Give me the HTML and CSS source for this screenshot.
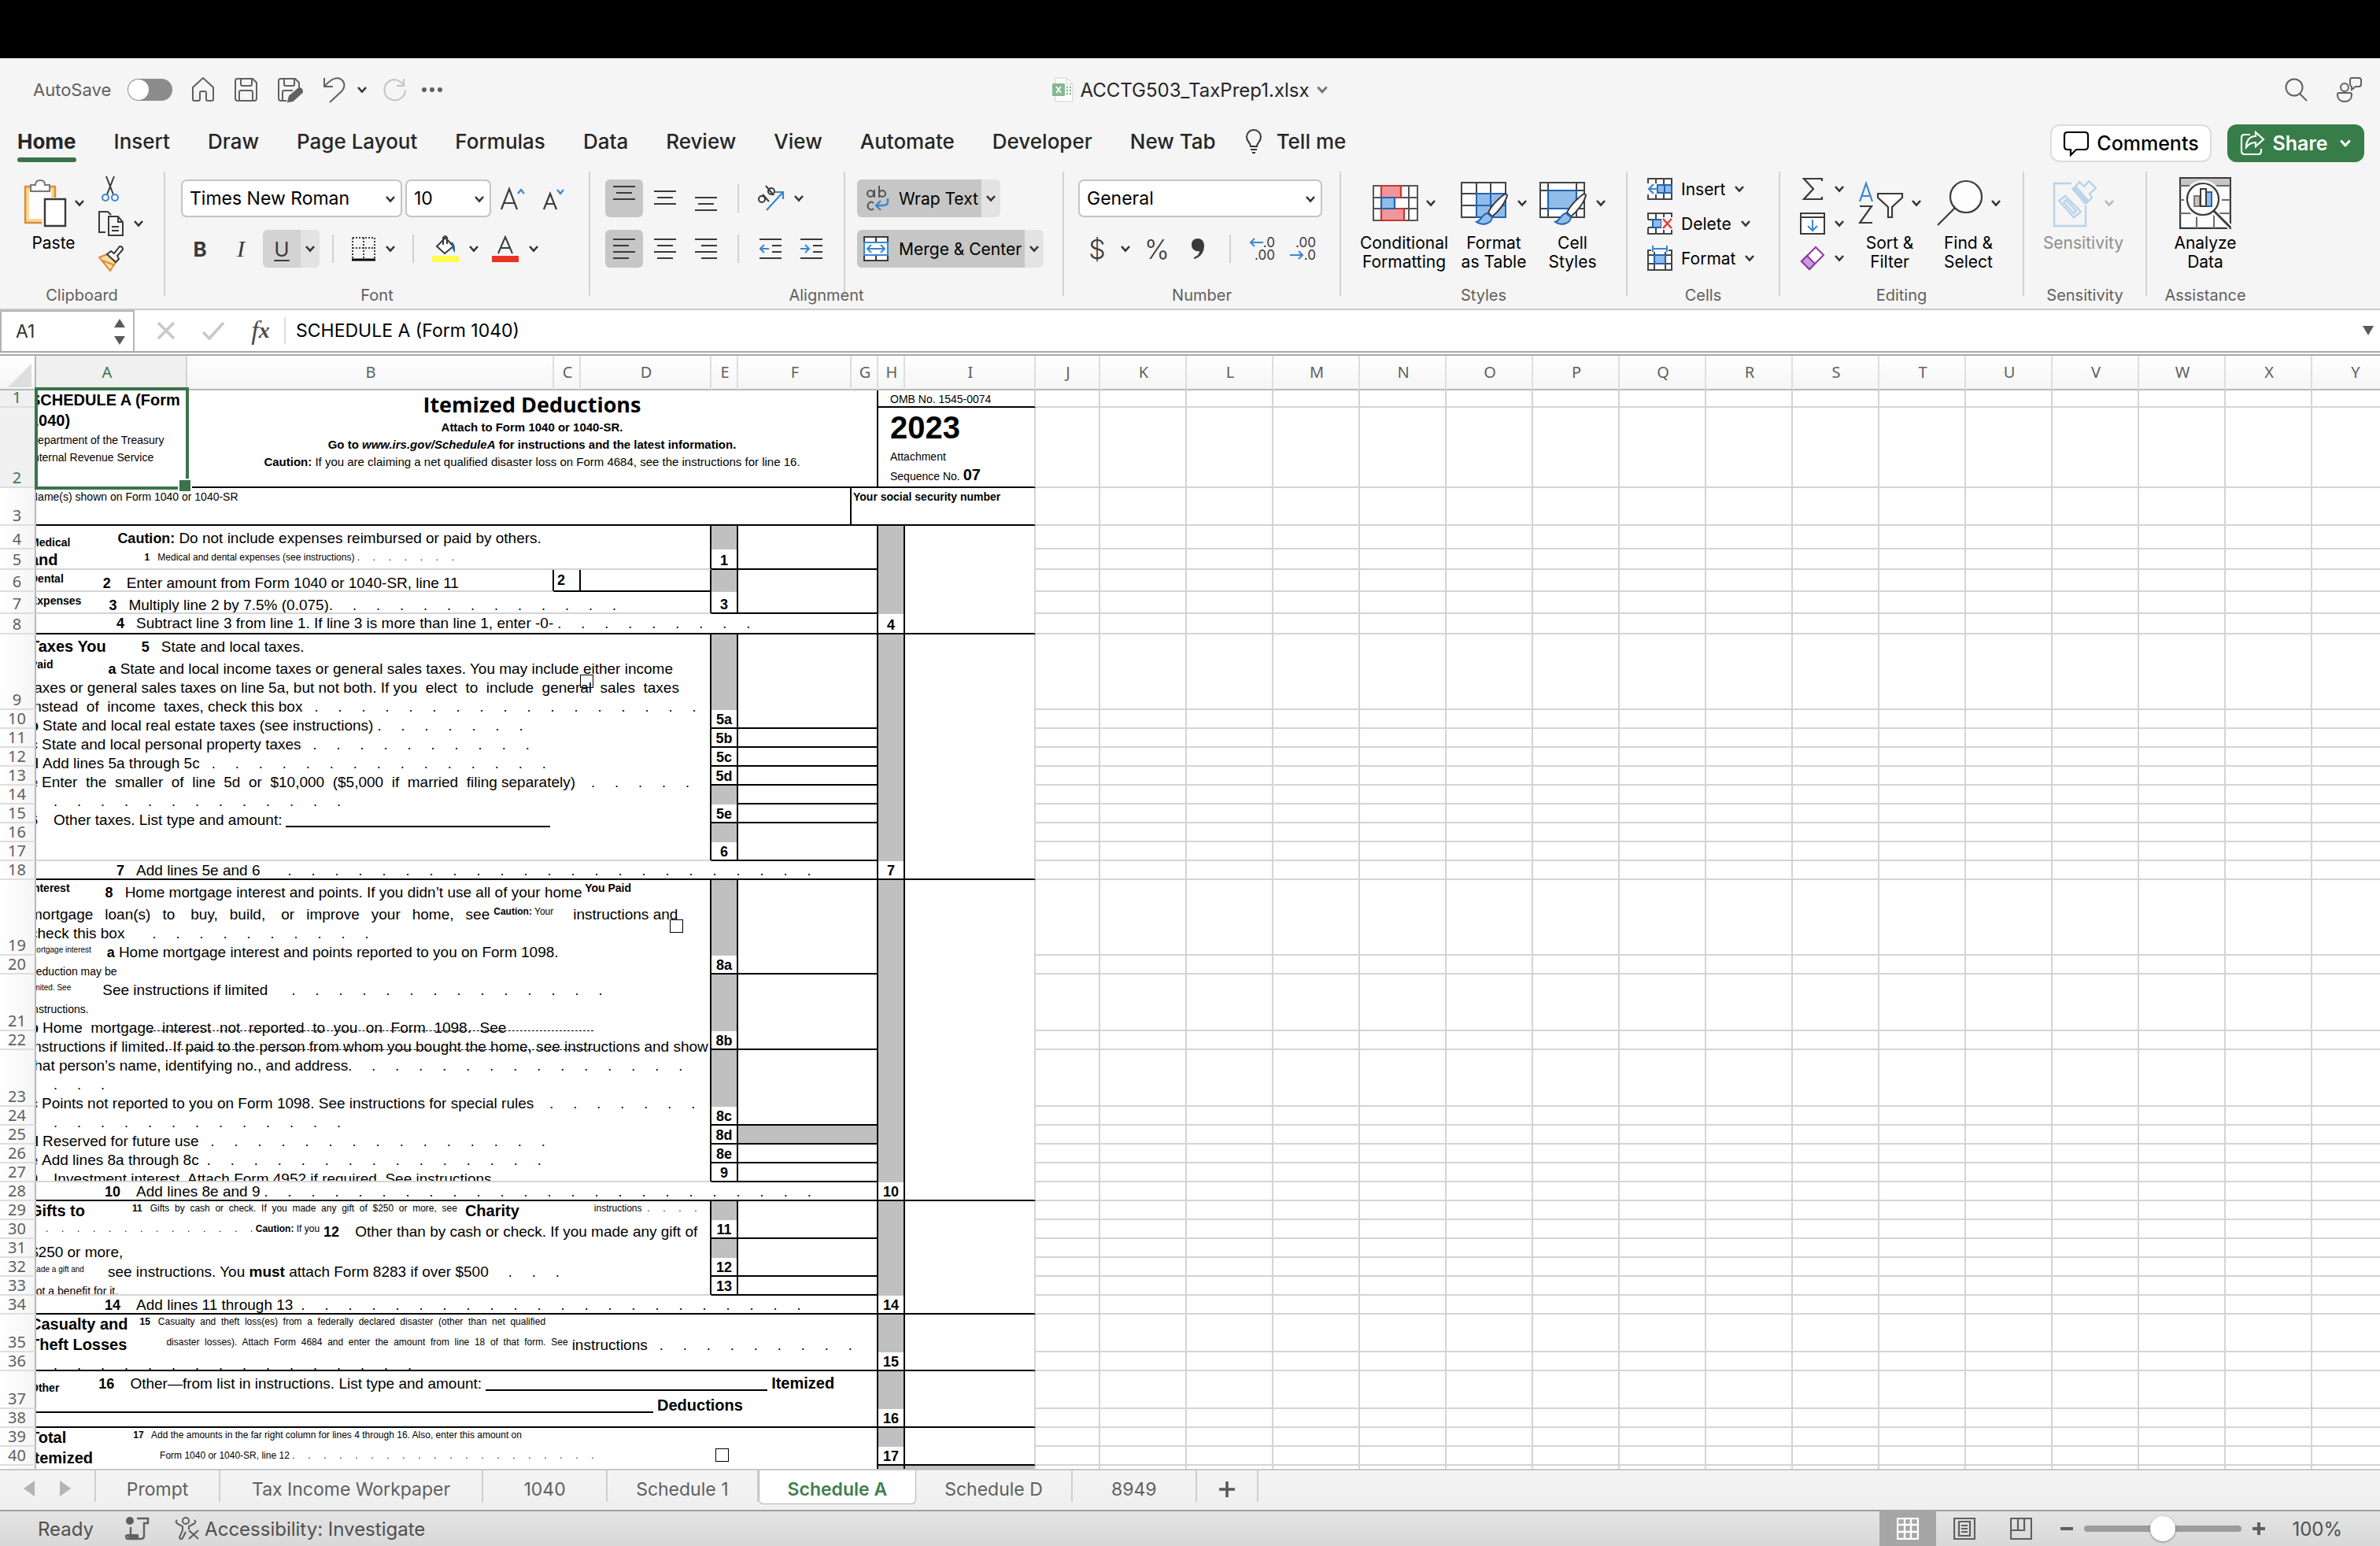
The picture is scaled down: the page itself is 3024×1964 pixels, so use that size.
FILE: index.html
```html
<!DOCTYPE html>
<html lang="en">
<head>
  <meta charset="UTF-8">
  <meta name="viewport" content="width=device-width, initial-scale=1.0">
  <title>ACCTG503_TaxPrep1.xlsx</title>
  <link rel="stylesheet" href="styles.css">
</head>
<body>
  <svg class="sprite" aria-hidden="true">
    <symbol id="chev" viewBox="0 0 14 10"><path d="M2 2l5 5.5L12 2" fill="none" stroke="currentColor" stroke-width="2.6"/></symbol>
    <symbol id="brush" viewBox="0 0 44 44"><path d="M40 2C33 6 22 17 18 26l5 5C31 25 40 13 42 4z" fill="#fff" stroke="#3b3a39" stroke-width="2"/><path d="M17 27c-7 0-7 9-14 11 7 5 19 3 20-6z" fill="#8fbce8" stroke="#2563b0" stroke-width="2"/></symbol>
  </svg>

  <div class="app">
    <div class="notch"></div>

    <!-- Title bar -->
    <header class="titlebar">
      <div class="quick">
        <label for="autosave">AutoSave</label>
        <input type="checkbox" class="toggle" id="autosave">
        <button class="icon" aria-label="Home"><svg width="32" height="34" viewBox="0 0 32 34"><path d="M3 14L16 2l13 12v15q0 2-2 2h-5q-2 0-2-2v-8q0-2-2-2h-4q-2 0-2 2v8q0 2-2 2H5q-2 0-2-2z"/></svg></button>
        <button class="icon" aria-label="Save"><svg width="32" height="34" viewBox="0 0 32 34"><path d="M5 3h19l5 5v20q0 3-3 3H5q-3 0-3-3V6q0-3 3-3zM9 3v7q0 2 2 2h10q2 0 2-2V3M7 31V20q0-2 2-2h13q2 0 2 2v11"/></svg></button>
        <button class="icon" aria-label="Save As"><svg width="34" height="34" viewBox="0 0 34 34"><path d="M12 31H5q-3 0-3-3V6q0-3 3-3h18l5 5v6M9 3v7q0 2 2 2h9q2 0 2-2V3M7 31V20q0-2 2-2h11"/><path d="M14 32l2-7 12-10q4 0 4 5L20 31z" fill="#616161"/></svg></button>
        <div class="pair">
          <button class="icon" aria-label="Undo"><svg width="32" height="34" viewBox="0 0 32 34"><path d="M3 2v11h11M4 12C12 3 18 1 23 3c6 3 7 10 3 15L10 33"/></svg></button>
          <svg class="chev"><use href="#chev"/></svg>
        </div>
        <button class="icon off" aria-label="Redo"><svg width="32" height="34" viewBox="0 0 32 34"><path d="M27 3v9h-9M27 12C22 3 12 2 6 8c-6 7-4 18 4 21 9 4 19-2 19-12"/></svg></button>
        <button class="icon dots-btn" aria-label="More"><svg width="32" height="10" viewBox="0 0 32 10"><g fill="#616161" stroke="none"><circle cx="6" cy="5" r="3"/><circle cx="16" cy="5" r="3"/><circle cx="26" cy="5" r="3"/></g></svg></button>
      </div>
      <button class="doc-title">
        <svg width="28" height="34" viewBox="0 0 28 34"><path d="M5 2h14l8 8v22H5z" fill="#fff" stroke="#cfcfcf"/><path d="M19 2v8h8" fill="none" stroke="#cfcfcf"/><rect x="1" y="9" width="16" height="16" rx="1" fill="#86b894"/><path d="M6 13l6 8M12 13l-6 8" stroke="#fff" stroke-width="1.8"/><path d="M19 14h2M19 18h2M19 22h2M23 14h2M23 18h2M23 22h2" stroke="#86b894" stroke-width="2.4"/></svg>
        <span>ACCTG503_TaxPrep1.xlsx</span>
        <svg class="chev wide"><use href="#chev"/></svg>
      </button>
      <div class="title-right">
        <button class="icon" aria-label="Search"><svg width="32" height="34" viewBox="0 0 32 34"><circle cx="13" cy="14" r="10.5"/><path d="M20 22l9 9"/></svg></button>
        <button class="icon" aria-label="Feedback"><svg width="34" height="34" viewBox="0 0 34 34"><circle cx="11" cy="14" r="5"/><path d="M2 23q0-2 2-2h14q2 0 2 2c0 6-4 9-9 9s-9-3-9-9zM20 2h9q3 0 3 3v5q0 3-3 3h-4l-5 4v-4q-2-1-2-3V5q0-3 2-3z"/></svg></button>
      </div>
    </header>

    <!-- Ribbon tabs -->
    <nav class="tabs">
      <button class="tab active">Home</button>
      <button class="tab">Insert</button>
      <button class="tab">Draw</button>
      <button class="tab">Page Layout</button>
      <button class="tab">Formulas</button>
      <button class="tab">Data</button>
      <button class="tab">Review</button>
      <button class="tab">View</button>
      <button class="tab">Automate</button>
      <button class="tab">Developer</button>
      <button class="tab">New Tab</button>
      <button class="tab tell">
        <svg width="24" height="32" viewBox="0 0 24 32"><path d="M8 22c0-5-5-6-5-12a9 9 0 0 1 18 0c0 6-5 7-5 12zM8 26h8M10 30h4" fill="none" stroke="#333" stroke-width="2"/></svg>
        Tell me
      </button>
      <div class="tab-actions">
        <button class="btn-comments"><svg width="34" height="34" viewBox="0 0 34 34"><path d="M6 3h22q4 0 4 4v14q0 4-4 4H17l-7 7v-7H6q-4 0-4-4V7q0-4 4-4z" fill="none" stroke="#000" stroke-width="2.2"/></svg>Comments</button>
        <button class="btn-share"><svg width="32" height="32" viewBox="0 0 32 32"><g fill="none" stroke="#fff" stroke-width="2.2"><path d="M13 5H6Q2 5 2 9v17q0 4 4 4h17q4 0 4-4v-3"/><path d="M20 2l10 9-10 9v-5c-6 0-9 2-12 6 0-8 4-14 12-14z"/></g></svg>Share<svg class="chev wide"><use href="#chev"/></svg></button>
      </div>
    </nav>

    <!-- Ribbon -->
    <section class="ribbon">
      <div class="group g-clipboard">
        <div class="body">
          <button class="big w92">
            <span class="pic"><svg width="56" height="62" viewBox="0 0 56 62"><path d="M3 10h38v46H3z" fill="#f5d98f" stroke="#e08a3c" stroke-width="2.4"/><path d="M8 15h28v36H8z" fill="#fdfdfd"/><path d="M10 16V8h6q0-6 6-6t6 6h6v8z" fill="#fff" stroke="#777" stroke-width="2"/><path d="M26 24h30v37H24z" fill="#f5f5f5"/><path d="M28 26h26v34H28z" fill="#fff" stroke="#3b3a39" stroke-width="2.4"/></svg><svg class="chev"><use href="#chev"/></svg></span>
            Paste
          </button>
          <div class="stack">
            <button class="row" aria-label="Cut"><svg width="32" height="34" viewBox="0 0 32 34"><path d="M11 1l9 23M21 1l-9 23" stroke="#3b3a39" stroke-width="2"/><g fill="none" stroke="#3b86cf" stroke-width="2"><circle cx="10" cy="28" r="4"/><circle cx="22" cy="28" r="4"/></g></svg></button>
            <button class="row" aria-label="Copy"><svg width="34" height="34" viewBox="0 0 34 34"><g fill="none" stroke="#3b3a39" stroke-width="2"><path d="M10 28H2V2h11l4 4"/><path d="M14 8h12l6 7v17H14zM26 8v7h6M18 21h9M18 26h9"/></g></svg><svg class="chev"><use href="#chev"/></svg></button>
            <button class="row" aria-label="Format Painter"><svg width="34" height="34" viewBox="0 0 34 34"><path d="M2 16l10-4 11 10-7 11z" fill="#f8dfa0" stroke="#e08a3c" stroke-width="2"/><path d="M6 20l16 6" stroke="#e08a3c" stroke-width="2"/><path d="M12 12l5-4 4 3 7-9q4 0 4 4l-7 8 2 4-4 4z" fill="#fff" stroke="#3b3a39" stroke-width="2"/></svg></button>
          </div>
        </div>
        <div class="label">Clipboard</div>
      </div>
      <div class="sep"></div>

      <div class="group g-font">
        <div class="body rows">
          <div class="line">
            <span class="drop font-name"><select aria-label="Font"><option>Times New Roman</option></select><svg class="chev"><use href="#chev"/></svg></span>
            <span class="drop font-size"><select aria-label="Font size"><option>10</option></select><svg class="chev"><use href="#chev"/></svg></span>
            <button class="tool" aria-label="Increase font size"><svg width="34" height="34" viewBox="0 0 34 34"><path d="M2 31L12 5l10 26M5 23h14" fill="none" stroke="#3b3a39" stroke-width="2.2"/><path d="M23 11l4-5 4 5" fill="none" stroke="#3b86cf" stroke-width="2.2"/></svg></button>
            <button class="tool" aria-label="Decrease font size"><svg width="34" height="34" viewBox="0 0 34 34"><path d="M4 31l8-20 8 20M7 24h10" fill="none" stroke="#3b3a39" stroke-width="2.2"/><path d="M21 6l4 5 4-5" fill="none" stroke="#3b86cf" stroke-width="2.2"/></svg></button>
          </div>
          <div class="line">
            <button class="tool letter bold">B</button>
            <button class="tool letter italic">I</button>
            <span class="split on-light"><button class="tool letter under">U</button><button class="more" aria-label="Underline options"><svg class="chev"><use href="#chev"/></svg></button></span>
            <span class="bar"></span>
            <span class="split"><button class="tool narrow" aria-label="Borders"><svg width="32" height="32" viewBox="0 0 32 32"><path d="M2 2h28M2 15h28M2 2v26M16 2v26M30 2v26" stroke="#3b3a39" stroke-width="2" stroke-dasharray="2 2"/><path d="M1 30h30" stroke="#000" stroke-width="3"/></svg></button><button class="more" aria-label="Border options"><svg class="chev"><use href="#chev"/></svg></button></span>
            <span class="bar"></span>
            <span class="split"><button class="tool" aria-label="Fill color"><svg width="34" height="34" viewBox="0 0 34 34"><path d="M6 14L17 3l10 11-11 9z" fill="#fff" stroke="#3b3a39" stroke-width="2"/><path d="M14 12V3q3-4 5 0v8" fill="none" stroke="#3b3a39" stroke-width="2"/><path d="M24 8q6 1 5 14-4-4-3-9z" fill="#2563b0"/><path d="M0 26h34v8H0z" fill="#fffb4b"/></svg></button><button class="more" aria-label="Fill options"><svg class="chev"><use href="#chev"/></svg></button></span>
            <span class="split"><button class="tool" aria-label="Font color"><svg width="34" height="34" viewBox="0 0 34 34"><path d="M8 23L17 2l9 21M11 16h12" fill="none" stroke="#3b3a39" stroke-width="2"/><path d="M0 26h34v8H0z" fill="#ea3323"/></svg></button><button class="more" aria-label="Font color options"><svg class="chev"><use href="#chev"/></svg></button></span>
          </div>
        </div>
        <div class="label">Font</div>
      </div>
      <div class="sep"></div>

      <div class="group g-align">
        <div class="body">
          <div class="rows half">
            <div class="line">
              <button class="tool on" aria-label="Top align"><svg class="glyph" viewBox="0 0 28 32"><path d="M0 1h28M4 9h20M0 17h28"/></svg></button>
              <button class="tool" aria-label="Middle align"><svg class="glyph" viewBox="0 0 28 32"><path d="M0 7h28M4 15h20M0 23h28"/></svg></button>
              <button class="tool" aria-label="Bottom align"><svg class="glyph" viewBox="0 0 28 32"><path d="M0 15h28M4 23h20M0 31h28"/></svg></button>
              <span class="bar"></span>
              <span class="split"><button class="tool" aria-label="Orientation"><svg width="36" height="34" viewBox="0 0 36 34"><g fill="none" stroke="#3b3a39" stroke-width="2"><circle cx="7" cy="18" r="4"/><path d="M8 12l8 9M12 1l10 12"/><circle cx="19" cy="8" r="4"/></g><path d="M13 32L33 10M24 9h10v9" fill="none" stroke="#3b86cf" stroke-width="2.2"/></svg></button><button class="more" aria-label="Orientation options"><svg class="chev"><use href="#chev"/></svg></button></span>
            </div>
            <div class="line">
              <button class="tool on" aria-label="Align left"><svg class="glyph" viewBox="0 0 28 32"><path d="M0 4h28M0 12h20M0 20h28M0 28h20"/></svg></button>
              <button class="tool" aria-label="Center"><svg class="glyph" viewBox="0 0 28 32"><path d="M0 4h28M4 12h20M0 20h28M4 28h20"/></svg></button>
              <button class="tool" aria-label="Align right"><svg class="glyph" viewBox="0 0 28 32"><path d="M0 4h28M8 12h20M0 20h28M8 28h20"/></svg></button>
              <span class="bar"></span>
              <button class="tool" aria-label="Decrease indent"><svg class="glyph" viewBox="0 0 28 32"><path d="M0 4h28M16 12h12M16 20h12M0 28h28"/><path class="blue" d="M12 16H1M6 11l-5 5 5 5"/></svg></button>
              <button class="tool" aria-label="Increase indent"><svg class="glyph" viewBox="0 0 28 32"><path d="M0 4h28M16 12h12M16 20h12M0 28h28"/><path class="blue" d="M0 16h11M6 11l5 5-5 5"/></svg></button>
            </div>
          </div>
          <div class="sep"></div>
          <div class="rows half-right">
            <div class="line">
              <span class="split on-dark"><button class="texty"><svg width="30" height="34" viewBox="0 0 30 34"><g fill="none" stroke="#555" stroke-width="2"><circle cx="5" cy="11" r="4"/><path d="M10 6v10M16 1v15"/><circle cx="20" cy="11" r="4"/><path d="M9 23q-3-3-6 0-3 4 0 7 3 3 6 0"/></g><path d="M27 17v4q0 5-6 5h-8M18 20l-6 6 6 6" fill="none" stroke="#3b86cf" stroke-width="2.4"/></svg>Wrap Text</button><button class="more" aria-label="Wrap options"><svg class="chev"><use href="#chev"/></svg></button></span>
            </div>
            <div class="line">
              <span class="split on-dark"><button class="texty merge"><svg width="32" height="32" viewBox="0 0 32 32"><path d="M1 1h30v30H1zM16 1v7M16 24v7" fill="#fff" stroke="#3b3a39" stroke-width="2.2"/><path d="M1 8h30v16H1z" fill="#fff" stroke="#3b86cf" stroke-width="2.2"/><path d="M6 16h20M10 11l-5 5 5 5M22 11l5 5-5 5" fill="none" stroke="#3b86cf" stroke-width="2"/></svg>Merge &amp; Center</button><button class="more" aria-label="Merge options"><svg class="chev"><use href="#chev"/></svg></button></span>
            </div>
          </div>
        </div>
        <div class="label">Alignment</div>
      </div>
      <div class="sep"></div>

      <div class="group g-number">
        <div class="body rows">
          <div class="line">
            <span class="drop num-format"><select aria-label="Number format"><option>General</option></select><svg class="chev"><use href="#chev"/></svg></span>
          </div>
          <div class="line">
            <span class="split"><button class="tool sign">$</button><button class="more" aria-label="Currency options"><svg class="chev"><use href="#chev"/></svg></button></span>
            <button class="tool sign">%</button>
            <button class="tool" aria-label="Comma style"><svg width="18" height="28" viewBox="0 0 18 28"><path d="M9 1c5 0 8 4 8 9 0 9-5 15-13 17v-2c5-2 7-5 7-8C5 18 1 14 1 9c0-5 3-8 8-8z" fill="#3b3a39"/></svg></button>
            <span class="bar"></span>
            <button class="tool decimals"><span><svg width="18" height="12" viewBox="0 0 18 12"><path d="M18 6H2M7 1L2 6l5 5"/></svg>.0</span><span>.00</span></button>
            <button class="tool decimals"><span>.00</span><span><svg width="18" height="12" viewBox="0 0 18 12"><path d="M0 6h16M11 1l5 5-5 5"/></svg>.0</span></button>
          </div>
        </div>
        <div class="label">Number</div>
      </div>
      <div class="sep"></div>

      <div class="group g-styles">
        <div class="body">
          <button class="big w120">
            <span class="pic"><svg width="58" height="46" viewBox="0 0 58 46"><path d="M1 1h56v44H1zM1 16h56M1 30h56M11 1v44M46 1v44" fill="#fdfdfd" stroke="#555" stroke-width="2"/><path d="M11 1h25v15H11zM11 30h29v15H11z" fill="#f0969a" stroke="#c8372d" stroke-width="2.2"/><path d="M11 16h17v14H11z" fill="#8fbce8" stroke="#2563b0" stroke-width="2.2"/></svg><svg class="chev"><use href="#chev"/></svg></span>
            Conditional<br>Formatting
          </button>
          <button class="big w108">
            <span class="pic"><svg width="62" height="56" viewBox="0 0 62 56"><path d="M1 2h56v44H1zM1 16h56M1 31h56M20 2v44M38 2v44" fill="#fdfdfd" stroke="#444" stroke-width="2"/><path d="M20 16h37v30H20zM38 16v30M20 31h37" fill="#8fbce8" stroke="#2563b0" stroke-width="2"/><use href="#brush" x="17" y="14" width="44" height="44"/></svg><svg class="chev"><use href="#chev"/></svg></span>
            Format<br>as Table
          </button>
          <button class="big w92">
            <span class="pic"><svg width="62" height="56" viewBox="0 0 62 56"><path d="M1 2h56v44H1zM1 12h56M1 35h56M11 2v44M47 2v44" fill="#fdfdfd" stroke="#444" stroke-width="2"/><path d="M11 12h36v23H11z" fill="#8fbce8" stroke="#2563b0" stroke-width="2.2"/><use href="#brush" x="17" y="14" width="44" height="44"/></svg><svg class="chev"><use href="#chev"/></svg></span>
            Cell<br>Styles
          </button>
        </div>
        <div class="label">Styles</div>
      </div>
      <div class="sep"></div>

      <div class="group g-cells">
        <div class="body">
          <div class="stack">
            <button class="row"><svg width="32" height="28" viewBox="0 0 32 28"><path d="M1 1h30v26H1zM1 9h30M1 19h30M11 1v26M21 1v26" fill="#fff" stroke="#444" stroke-width="2"/><path d="M13 9h18v10H13zM22 9v10" fill="#8fbce8" stroke="#2563b0" stroke-width="2"/><path d="M0 7h12v14H0z" fill="#f5f5f5"/><path d="M14 14H2M8 8l-6 6 6 6" fill="none" stroke="#3b86cf" stroke-width="2.2"/></svg>Insert<svg class="chev"><use href="#chev"/></svg></button>
            <button class="row"><svg width="32" height="28" viewBox="0 0 32 28"><path d="M1 9V1h30v8H1M11 1v8M21 1v8M1 19v8h30v-8H1M11 19v8M21 19v8" fill="#fff" stroke="#444" stroke-width="2"/><path d="M7 9h11v10H7z" fill="#8fbce8" stroke="#2563b0" stroke-width="2"/><path d="M18 6h14v16H18z" fill="#f5f5f5"/><path d="M20 8l11 12M31 8L20 20" stroke="#dd3b34" stroke-width="2.4"/></svg>Delete<svg class="chev"><use href="#chev"/></svg></button>
            <button class="row"><svg width="32" height="32" viewBox="0 0 32 32"><path d="M1 6h30v25H1zM1 12h30M1 23h30M9 6v25M23 6v25" fill="#fff" stroke="#444" stroke-width="2"/><path d="M5 0h22v8H5z" fill="#f5f5f5"/><path d="M9 12h14v11H9z" fill="#8fbce8" stroke="#2563b0" stroke-width="2.2"/><path d="M7 4h18M7 0v8M25 0v8" stroke="#3b86cf" stroke-width="2"/></svg>Format<svg class="chev"><use href="#chev"/></svg></button>
          </div>
        </div>
        <div class="label">Cells</div>
      </div>
      <div class="sep"></div>

      <div class="group g-editing">
        <div class="body">
          <div class="stack">
            <button class="row" aria-label="AutoSum"><svg width="32" height="30" viewBox="0 0 32 30"><path d="M28 5V2H5l12 13L5 28h23v-3" fill="none" stroke="#3b3a39" stroke-width="2.2"/></svg><svg class="chev"><use href="#chev"/></svg></button>
            <button class="row" aria-label="Fill"><svg width="32" height="28" viewBox="0 0 32 28"><path d="M1 1h30v26H1zM1 6h30" fill="#fff" stroke="#3b3a39" stroke-width="2"/><path d="M16 9v14M10 17l6 6 6-6" fill="none" stroke="#3b86cf" stroke-width="2"/></svg><svg class="chev"><use href="#chev"/></svg></button>
            <button class="row" aria-label="Clear"><svg width="32" height="32" viewBox="0 0 32 32"><path d="M2 20L20 2l10 10-18 18z" fill="#fff" stroke="#8d3aa0" stroke-width="2"/><path d="M2 20l7-7 10 10-7 7z" fill="#cf9cdb" stroke="#8d3aa0" stroke-width="2"/></svg><svg class="chev"><use href="#chev"/></svg></button>
          </div>
          <button class="big w100">
            <span class="pic"><svg width="58" height="56" viewBox="0 0 58 56"><path d="M2 26L10 3l8 23M5 19h10" fill="none" stroke="#3b86cf" stroke-width="2.2"/><path d="M2 32h15L2 53h16" fill="none" stroke="#3b3a39" stroke-width="2.2"/><path d="M25 16h31v5L43 33v13h-5V33L25 21z" fill="#fff" stroke="#3b3a39" stroke-width="2.2"/></svg><svg class="chev"><use href="#chev"/></svg></span>
            Sort &amp;<br>Filter
          </button>
          <button class="big w100">
            <span class="pic"><svg width="60" height="60" viewBox="0 0 60 60"><circle cx="38" cy="22" r="20" fill="#fdfdfd" stroke="#3b3a39" stroke-width="2.2"/><path d="M24 36L2 58" stroke="#3b3a39" stroke-width="2.2"/></svg><svg class="chev"><use href="#chev"/></svg></span>
            Find &amp;<br>Select
          </button>
        </div>
        <div class="label">Editing</div>
      </div>
      <div class="sep"></div>

      <div class="group g-sens">
        <div class="body">
          <button class="big w150" disabled>
            <span class="pic"><svg width="56" height="62" viewBox="0 0 56 62"><g fill="none" stroke="#b9d3ea" stroke-width="2.4"><path d="M24 6H2v54h40V34"/><path d="M8 28l8-6 20 20-9 7zM14 30l3-3 13 14-3 3z"/><path d="M26 14l8-10 6 6 6-7 9 9-8 7 3 5-7 7z"/></g><path d="M24 12l6-3 16 18-5 6z" fill="#b9d3ea"/></svg><svg class="chev"><use href="#chev"/></svg></span>
            Sensitivity
          </button>
        </div>
        <div class="label">Sensitivity</div>
      </div>
      <div class="sep"></div>

      <div class="group g-assist">
        <div class="body">
          <button class="big w148">
            <span class="pic"><svg width="66" height="66" viewBox="0 0 66 66"><path d="M1 1h64v64H1z" fill="#fdfdfd" stroke="#3b3a39" stroke-width="2.4"/><path d="M2 2h62v9H2z" fill="#c8c6c4"/><path d="M1 11h64M1 29h64M1 46h64M22 46v19M44 46v19" stroke="#6b6b6b" stroke-width="2"/><circle cx="30" cy="28" r="24" fill="#f5f5f5"/><path d="M44 44l21 20" stroke="#f5f5f5" stroke-width="7"/><circle cx="30" cy="28" r="20" fill="#fdfdfd" stroke="#3b3a39" stroke-width="2.2"/><path d="M44 43l21 21" stroke="#3b3a39" stroke-width="2.6"/><path d="M19 24h7v13h-7z" fill="#c8c6c4" stroke="#777" stroke-width="2"/><path d="M34 19h7v18h-7z" fill="#8fbce8" stroke="#2563b0" stroke-width="2"/><path d="M27 15h7v22h-7z" fill="#fff" stroke="#3b3a39" stroke-width="2"/></svg></span>
            Analyze<br>Data
          </button>
        </div>
        <div class="label">Assistance</div>
      </div>
    </section>

    <!-- Formula bar -->
    <section class="formula-bar">
      <div class="name-box">
        <input type="text" value="A1" aria-label="Name box">
        <svg width="16" height="34" viewBox="0 0 16 34"><path d="M8 1l7 11H1zM8 34L1 23h14z" fill="#5a5a5a"/></svg>
      </div>
      <button class="fx-btn" aria-label="Cancel"><svg width="24" height="24" viewBox="0 0 24 24"><path d="M2 2l20 20M22 2L2 22" stroke="#c8c8c8" stroke-width="3.6"/></svg></button>
      <button class="fx-btn" aria-label="Enter"><svg width="30" height="24" viewBox="0 0 30 24"><path d="M2 14l8 8L28 2" fill="none" stroke="#c8c8c8" stroke-width="3.6"/></svg></button>
      <button class="fx-btn fx">f<b>x</b></button>
      <input type="text" class="formula" value="SCHEDULE A (Form 1040)" aria-label="Formula">
      <svg class="expand" width="14" height="12" viewBox="0 0 14 12"><path d="M0 0h14L7 12z" fill="#5a5a5a"/></svg>
    </section>

    <!-- Worksheet -->
    <main class="sheet">
      <table class="grid">
        <colgroup>
          <col class="c-head"><col class="c-a"><col class="c-b"><col class="c-s"><col class="c-l"><col class="c-s"><col class="c-f"><col class="c-s"><col class="c-s"><col class="c-l"><col class="c-j">
        </colgroup>
        <thead>
          <tr>
            <th class="corner"><svg width="30" height="30" viewBox="0 0 30 30"><path d="M30 0v30H0z" fill="#dedede"/></svg></th>
            <th class="sel">A</th><th>B</th><th>C</th><th>D</th><th>E</th><th>F</th><th>G</th><th>H</th><th>I</th><th>J</th>
          </tr>
        </thead>
        <tbody>
          <tr>
            <td class="ink no-r" rowspan="2"><div class="txt"><p class="l26"><b class="lg">SCHEDULE A (Form</b></p><p class="l26"><b class="lg">1040)</b></p><p class="l22 o">Department of the Treasury</p><p class="l22 o">Internal Revenue Service</p></div></td>
            <td class="ink" rowspan="2" colspan="6"><div class="txt mid"><h1>Itemized Deductions</h1><p class="l22 h"><b>Attach to Form 1040 or 1040-SR.</b></p><p class="l22 h"><b>Go to <i>www.irs.gov/ScheduleA</i> for instructions and the latest information.</b></p><p class="l22 h"><b>Caution:</b> If you are claiming a net qualified disaster loss on Form 4684, see the instructions for line 16.</p></div></td>
            <td class="ink soft-r" colspan="2"><div class="txt side"><p class="l22 o">OMB No. 1545-0074</p></div></td>
          </tr>
          <tr>
            <td class="ink soft-r" colspan="2"><div class="txt side"><p class="year">2023</p><p class="o">Attachment</p><p class="o l26">Sequence No. <b class="lg">07</b></p></div></td>
          </tr>
          <tr>
            <td class="ink" colspan="6"><div class="txt"><p class="l22 o">Name(s) shown on Form 1040 or 1040-SR</p></div></td>
            <td class="ink soft-r" colspan="3"><div class="txt near"><p class="l22 o"><b>Your social security number</b></p></div></td>
          </tr>
          <tr>
            <td class="ink soft-b" rowspan="2" colspan="4"><div class="txt"><p class="l32"><b class="md down">Medical</b>            <b>Caution:</b> <span>Do not include expenses reimbursed or paid by others.</span></p><p><b class="lg">and</b>                      <small class="up"><b>1</b>   Medical and dental expenses (see instructions) <i class="dots" data-n="7"></i></small></p></div></td>
            <td class="ink shade"></td>
            <td class="ink" rowspan="2" colspan="2"></td>
            <td class="ink shade" rowspan="4"></td>
            <td class="ink soft-r" rowspan="5"></td>
          </tr>
          <tr><td class="ink no">1</td></tr>
          <tr>
            <td class="ink soft-b" colspan="2"><div class="txt"><p class="l34"><b class="md up2">Dental</b>          <b>2</b>    <span>Enter amount from Form 1040 or 1040-SR, line 11</span></p></div></td>
            <td class="ink no left">2</td>
            <td class="ink"></td>
            <td class="ink shade"></td>
            <td class="ink" rowspan="2" colspan="2"></td>
          </tr>
          <tr>
            <td class="ink soft-b" colspan="4"><div class="txt"><p class="l34"><b class="md up2">Expenses</b>       <b>3</b>   <span>Multiply line 2 by 7.5% (0.075)</span><i class="dots" data-n="13"></i></p></div></td>
            <td class="ink no">3</td>
          </tr>
          <tr>
            <td class="ink" colspan="7"><div class="txt"><p>                      <b>4</b>   <span>Subtract line 3 from line 1. If line 3 is more than line 1, enter -0-</span> <i class="dots" data-n="9"></i></p></div></td>
            <td class="ink no">4</td>
          </tr>
          <tr>
            <td class="ink soft-b" rowspan="9" colspan="4">
              <div class="txt"><p class="l32"><b class="lg">Taxes You</b>         <b>5</b>   <span>State and local taxes.</span></p><p><b class="md up2">Paid</b>              <b>a</b> <span>State and local income taxes or general sales taxes. You may include either income</span></p><p><span>taxes or general sales taxes on line 5a, but not both. If you  elect  to  include  general  sales  taxes</span></p><p><span>instead  of  income  taxes, check this box</span>   <i class="dots" data-n="17"></i></p><p><b>b</b> <span>State and local real estate taxes (see instructions)</span> <i class="dots" data-n="7"></i></p><p><b>c</b> <span>State and local personal property taxes</span>   <i class="dots" data-n="10"></i></p><p><b>d</b> <span>Add lines 5a through 5c</span>   <i class="dots" data-n="15"></i></p><p><b>e</b> <span>Enter  the  smaller  of  line  5d  or  $10,000  ($5,000  if  married  filing separately)</span>    <i class="dots" data-n="5"></i></p><p>      <i class="dots" data-n="13"></i></p><p><b>6</b>    <span>Other taxes. List type and amount:</span> <u class="blank a"></u></p></div>
              <input type="checkbox" class="box sales" aria-label="General sales taxes">
            </td>
            <td class="ink shade"></td>
            <td class="ink" rowspan="2" colspan="2"></td>
            <td class="ink shade" rowspan="9"></td>
            <td class="ink soft-r" rowspan="10"></td>
          </tr>
          <tr><td class="ink no">5a</td></tr>
          <tr><td class="ink no">5b</td><td class="ink" colspan="2"></td></tr>
          <tr><td class="ink no">5c</td><td class="ink" colspan="2"></td></tr>
          <tr><td class="ink no">5d</td><td class="ink" colspan="2"></td></tr>
          <tr><td class="ink shade"></td><td class="ink" colspan="2"></td></tr>
          <tr><td class="ink no">5e</td><td class="ink" colspan="2"></td></tr>
          <tr><td class="ink shade"></td><td class="ink" rowspan="2" colspan="2"></td></tr>
          <tr><td class="ink no">6</td></tr>
          <tr>
            <td class="ink" colspan="7"><div class="txt"><p>                      <b>7</b>   <span>Add lines 5e and 6</span>       <i class="dots" data-n="23"></i></p></div></td>
            <td class="ink no">7</td>
          </tr>
          <tr>
            <td class="ink soft-b" rowspan="9" colspan="4">
              <div class="txt"><p class="l32"><b class="md up2">Interest</b>         <b>8</b>   <span>Home mortgage interest and points. If you didn’t use all of your home</span><b class="md up2"> You Paid</b></p><p><span>mortgage</span>   <span>loan(s)</span>   <span>to</span>    <span>buy,</span>   <span>build,</span>    <span>or</span>   <span>improve</span>   <span>your</span>   <span>home,</span>   <span>see</span> <small class="up"><b>Caution:</b> Your</small>     <span>instructions and</span></p><p><span>check this box</span>       <i class="dots" data-n="10"></i></p><p><small class="tiny up">mortgage interest</small>    <b>a</b> <span>Home mortgage interest and points reported to you on Form 1098.</span></p><p class="o">deduction may be</p><p><small class="tiny up">limited. See</small>        <span>See instructions if limited</span>      <i class="dots" data-n="14"></i></p><p class="o">instructions.</p><p><b>b</b> <span>Home  mortgage  interest  not  reported  to  you  on  Form  1098.  See</span></p><p><span>instructions if limited. If paid to the person from whom you bought the home, see instructions and show</span></p><p><span>that person’s name, identifying no., and address</span><i class="dots" data-n="15"></i></p><p>      <i class="dots" data-n="3"></i></p><p><b>c</b> <span>Points not reported to you on Form 1098. See instructions for special rules</span>    <i class="dots" data-n="7"></i></p><p>      <i class="dots" data-n="13"></i></p><p><b>d</b> <span>Reserved for future use</span>   <i class="dots" data-n="15"></i></p><p><b>e</b> <span>Add lines 8a through 8c</span>  <i class="dots" data-n="15"></i></p><p><b>9</b>    <span>Investment interest. Attach Form 4952 if required. See instructions</span></p></div>
              <input type="checkbox" class="box loan" aria-label="Mortgage loan use">
              <div class="dash first"></div>
              <div class="dash second"></div>
            </td>
            <td class="ink shade"></td>
            <td class="ink" rowspan="2" colspan="2"></td>
            <td class="ink shade" rowspan="9"></td>
            <td class="ink soft-r" rowspan="10"></td>
          </tr>
          <tr><td class="ink no">8a</td></tr>
          <tr><td class="ink shade"></td><td class="ink" rowspan="2" colspan="2"></td></tr>
          <tr><td class="ink no">8b</td></tr>
          <tr><td class="ink shade"></td><td class="ink" rowspan="2" colspan="2"></td></tr>
          <tr><td class="ink no">8c</td></tr>
          <tr><td class="ink no">8d</td><td class="ink fill" colspan="2"></td></tr>
          <tr><td class="ink no">8e</td><td class="ink" colspan="2"></td></tr>
          <tr><td class="ink no">9</td><td class="ink" colspan="2"></td></tr>
          <tr>
            <td class="ink" colspan="7"><div class="txt"><p>                   <b>10</b>    <span>Add lines 8e and 9</span> <i class="dots" data-n="24"></i></p></div></td>
            <td class="ink no">10</td>
          </tr>
          <tr>
            <td class="ink soft-b" rowspan="5" colspan="4"><div class="txt"><p class="l26"><b class="lg">Gifts to</b>            <small class="up"><b>11</b>   Gifts  by  cash  or  check.  If  you  made  any  gift  of  $250  or  more,  see</small>  <b class="lg">Charity</b>                   <small class="up">instructions  <i class="dots" data-n="4"></i></small></p><p class="l26">    <small class="up"><i class="dots" data-n="14"></i> <b>Caution:</b> If you</small> <b>12</b>    <span>Other than by cash or check. If you made any gift of</span></p><p class="l26"><span>$250 or more,</span></p><p><small class="tiny up">made a gift and</small>      <span>see instructions. You <b>must</b> attach Form 8283 if over $500</span>     <i class="dots" data-n="3"></i></p><p class="o">not a benefit for it.</p></div></td>
            <td class="ink shade"></td>
            <td class="ink" rowspan="2" colspan="2"></td>
            <td class="ink shade" rowspan="5"></td>
            <td class="ink soft-r" rowspan="6"></td>
          </tr>
          <tr><td class="ink no">11</td></tr>
          <tr><td class="ink shade"></td><td class="ink" rowspan="2" colspan="2"></td></tr>
          <tr><td class="ink no">12</td></tr>
          <tr><td class="ink no">13</td><td class="ink" colspan="2"></td></tr>
          <tr>
            <td class="ink" colspan="7"><div class="txt"><p>                   <b>14</b>    <span>Add lines 11 through 13</span>  <i class="dots" data-n="22"></i></p></div></td>
            <td class="ink no">14</td>
          </tr>
          <tr>
            <td class="ink" rowspan="2" colspan="7"><div class="txt"><p class="l26"><b class="lg">Casualty and</b>   <small class="up"><b>15</b>   Casualty  and  theft  loss(es)  from  a  federally  declared  disaster  (other  than  net  qualified</small></p><p class="l26"><b class="lg">Theft Losses</b>          <small class="up">disaster  losses).  Attach  Form  4684  and  enter  the  amount  from  line  18  of  that  form.  See</small> <span>instructions</span>   <i class="dots" data-n="9"></i></p><p>      <i class="dots" data-n="16"></i></p></div></td>
            <td class="ink shade"></td>
            <td class="ink soft-r" rowspan="2"></td>
          </tr>
          <tr><td class="ink no">15</td></tr>
          <tr>
            <td class="ink" rowspan="2" colspan="7"><div class="txt"><p class="l32"><b class="md down">Other</b>          <b>16</b>    <span>Other—from list in instructions. List type and amount:</span> <u class="blank b"></u> <b class="lg">Itemized</b></p><p><u class="blank c"></u> <b class="lg">Deductions</b></p></div></td>
            <td class="ink shade"></td>
            <td class="ink soft-r" rowspan="2"></td>
          </tr>
          <tr><td class="ink no">16</td></tr>
          <tr>
            <td class="ink no-b" rowspan="3" colspan="7">
              <div class="txt"><p class="l26"><b class="lg">Total</b>                 <small class="up"><b>17</b>   Add the amounts in the far right column for lines 4 through 16. Also, enter this amount on</small></p><p class="l26"><b class="lg">Itemized</b>                 <small class="up">Form 1040 or 1040-SR, line 12 <i class="dots" data-n="20"></i></small></p></div>
              <input type="checkbox" class="box elect" aria-label="Elect to itemize">
            </td>
            <td class="ink shade"></td>
            <td class="ink soft-r" rowspan="2"></td>
          </tr>
          <tr><td class="ink no">17</td></tr>
          <tr><td class="ink shade"></td><td class="shade"></td></tr>
        </tbody>
      </table>
      <div class="selection"></div>
    </main>

    <!-- Sheet tabs -->
    <nav class="sheet-tabs">
      <button class="arrow" aria-label="Previous sheet"><svg width="14" height="20" viewBox="0 0 14 20"><path d="M14 0v20L0 10z" fill="#b4b4b4"/></svg></button>
      <button class="arrow" aria-label="Next sheet"><svg width="14" height="20" viewBox="0 0 14 20"><path d="M0 0v20l14-10z" fill="#b4b4b4"/></svg></button>
      <button class="st first">Prompt</button>
      <button class="st wide">Tax Income Workpaper</button>
      <button class="st">1040</button>
      <button class="st">Schedule 1</button>
      <button class="st active">Schedule A</button>
      <button class="st">Schedule D</button>
      <button class="st">8949</button>
      <button class="st plus" aria-label="New sheet"><svg width="20" height="20" viewBox="0 0 20 20"><path d="M0 10h20M10 0v20" stroke="#5a5a5a" stroke-width="3.6"/></svg></button>
    </nav>

    <!-- Status bar -->
    <footer class="status">
      <span class="ready">Ready</span>
      <svg class="macro" width="32" height="30" viewBox="0 0 32 30"><circle cx="6" cy="5" r="5" fill="#5f5f5f"/><path d="M15 2h14v6h-5v16q0 4-4 4H4q-3 0-3-4h15M7 13v11" fill="none" stroke="#5f5f5f" stroke-width="2.4"/><path d="M2 22h15v6H5z" fill="#5f5f5f"/></svg>
      <button class="access"><svg width="32" height="30" viewBox="0 0 32 30"><g fill="none" stroke="#5f5f5f" stroke-width="2"><circle cx="14" cy="5" r="4"/><path d="M3 4q-3 3 1 5l6 3v5L6 26q1 4 4 1l4-8M25 4q3 3-1 5l-6 3v4"/><path d="M18 17l12 11M30 17L18 28"/></g></svg>Accessibility: Investigate</button>
      <div class="views">
        <button class="view on" aria-label="Normal view"><svg width="28" height="28" viewBox="0 0 28 28"><path d="M1 1h26v26H1zM1 9h26M1 18h26M10 1v26M18 1v26" fill="none" stroke="#fff" stroke-width="2.4"/></svg></button>
        <button class="view" aria-label="Page layout view"><svg width="28" height="28" viewBox="0 0 28 28"><path d="M1 1h26v26H1zM7 5h14v18H7zM10 10h8M10 14h8M10 18h8" fill="none" stroke="#5f5f5f" stroke-width="2.2"/></svg></button>
        <button class="view" aria-label="Page break view"><svg width="28" height="28" viewBox="0 0 28 28"><path d="M1 1h26v26H1zM1 16h17V1M10 1v15" fill="none" stroke="#5f5f5f" stroke-width="2.2"/></svg></button>
        <button class="zoom-btn" aria-label="Zoom out"><svg width="16" height="16" viewBox="0 0 16 16"><path d="M0 8h16" stroke="#5f5f5f" stroke-width="4"/></svg></button>
        <input type="range" class="zoom" min="0" max="100" value="50" aria-label="Zoom">
        <button class="zoom-btn" aria-label="Zoom in"><svg width="16" height="16" viewBox="0 0 16 16"><path d="M0 8h16M8 0v16" stroke="#5f5f5f" stroke-width="4"/></svg></button>
        <span class="percent">100%</span>
      </div>
    </footer>
  </div>

  <script src="script.js"></script>
</body>
</html>
```
FILE: styles.css
```css
/* Reset & Base */
* {
  margin: 0;
  padding: 0;
  box-sizing: border-box;
}

body {
  background: #fff;
  color: #000;
  font-family: Inter, "Liberation Sans", sans-serif;
}

button,
input,
select {
  font: inherit;
  color: inherit;
  background: none;
  border: none;
  border-radius: 0;
  appearance: none;
  outline: none;
}

svg {
  display: block;
  flex: none;
}

.sprite {
  position: absolute;
  width: 0;
  height: 0;
}

.app {
  height: 100vh;
  display: flex;
  flex-direction: column;
  overflow: hidden;
}

.notch {
  height: 74px;
  flex: none;
  background: #000;
}

.chev {
  width: 14px;
  height: 10px;
  color: #333;
}

.chev.wide {
  width: 16px;
  height: 12px;
}

/* Title bar */
.titlebar {
  flex: none;
  height: 80px;
  display: grid;
  grid-template-columns: 1fr auto 1fr;
  align-items: center;
  padding: 0 22px;
  background: #f5f5f5;
}

.quick {
  display: flex;
  align-items: center;
  gap: 23px;
  padding-left: 20px;
  font-size: 22px;
  color: #5f5f5f;
}

.quick label {
  margin-right: -2px;
}

.toggle {
  width: 57px;
  height: 28px;
  border-radius: 14px;
  background: #8c8c8c;
}

.toggle::before {
  content: "";
  display: block;
  width: 26px;
  height: 26px;
  margin: 1px;
  border-radius: 50%;
  background: #fff;
}

.icon svg {
  fill: none;
  stroke: #616161;
  stroke-width: 2;
}

.icon.off svg {
  stroke: #c4c4c4;
}

.dots-btn {
  margin-left: -8px;
}

.pair {
  display: flex;
  align-items: center;
  gap: 12px;
  margin-right: -4px;
}

.doc-title {
  display: flex;
  align-items: center;
  gap: 8px;
  font-size: 24px;
  color: #262626;
}

.doc-title .chev {
  color: #777;
}

.title-right {
  display: flex;
  justify-content: flex-end;
  gap: 34px;
}

/* Ribbon tabs */
.tabs {
  flex: none;
  height: 64px;
  display: flex;
  align-items: flex-start;
  gap: 48px;
  padding: 0 20px 0 22px;
  background: #f5f5f5;
}

.tab {
  height: 52px;
  font-size: 26px;
  font-weight: 500;
  line-height: 50px;
  color: #262626;
}

.tab.active {
  font-weight: 700;
  position: relative;
}

.tab.active::after {
  content: "";
  position: absolute;
  left: 0;
  right: 0;
  bottom: 0;
  height: 6px;
  border-radius: 3px;
  background: #3b734c;
}

.tab.tell {
  display: flex;
  align-items: center;
  gap: 17px;
  margin-left: -12px;
}

.tab-actions {
  display: flex;
  gap: 20px;
  margin-left: auto;
  padding-top: 4px;
}

.tab-actions button {
  height: 48px;
  display: flex;
  align-items: center;
  justify-content: center;
  gap: 9px;
  border-radius: 12px;
  font-size: 25px;
}

.btn-comments {
  width: 205px;
  background: #fff;
  border: 2px solid #dcdcdc;
  font-weight: 500;
}

.btn-share {
  width: 174px;
  background: #377d49;
  color: #fff;
  font-weight: 600;
}

.btn-share .chev {
  color: #fff;
  margin-left: 5px;
}

/* Ribbon */
.ribbon {
  flex: none;
  height: 176px;
  display: flex;
  align-items: flex-start;
  background: #f5f5f5;
  border-bottom: 2px solid #cacaca;
}

.sep {
  flex: none;
  width: 2px;
  height: 158px;
  background: #d2d2d2;
}

.group {
  flex: none;
}

.body {
  height: 142px;
  display: flex;
  align-items: flex-start;
}

.label {
  font-size: 20px;
  line-height: 30px;
  text-align: center;
  color: #5f5f5f;
}

.g-clipboard { width: 208px; }
.g-clipboard .body { padding-left: 22px; gap: 10px; }
.g-font { width: 538px; }
.g-font .body { padding-left: 20px; }
.g-align { width: 600px; }
.g-number { width: 350px; }
.g-number .body { padding-left: 18px; }
.g-styles { width: 362px; }
.g-styles .body { padding-left: 20px; }
.g-cells { width: 192px; }
.g-cells .body { padding-left: 25px; }
.g-editing { width: 308px; }
.g-editing .body { padding-left: 25px; }
.g-editing .stack { margin-right: 7px; }
.g-sens { width: 154px; }
.g-assist { width: 148px; }

.rows {
  display: flex;
  flex-direction: column;
  gap: 16px;
  padding-top: 10px;
}

.half {
  width: 322px;
  padding-left: 19px;
}

.half-right {
  padding-left: 15px;
}

.line {
  height: 48px;
  display: flex;
  align-items: center;
  gap: 4px;
}

.tool {
  width: 48px;
  height: 48px;
  display: flex;
  align-items: center;
  justify-content: center;
}

.tool.narrow {
  width: 44px;
}

.tool.on {
  background: #c6c6c6;
  border-radius: 6px;
}

.bar {
  width: 2px;
  height: 36px;
  margin: 0 12px;
  background: #d2d2d2;
}

.split {
  display: flex;
  border-radius: 6px;
  overflow: hidden;
}

.more {
  width: 24px;
  height: 48px;
  display: flex;
  align-items: center;
  justify-content: center;
}

.on-light .tool {
  background: #d3d3d3;
}

.on-light .more,
.on-dark .more {
  background: #e3e3e3;
}

.on-dark .texty {
  background: #c6c6c6;
}

.texty {
  height: 48px;
  display: flex;
  align-items: center;
  gap: 11px;
  padding: 0 4px 0 12px;
  font-size: 21px;
}

.texty.merge {
  padding-left: 8px;
  gap: 13px;
}

.letter {
  font-size: 26px;
  color: #3b3a39;
}

.letter.bold {
  font-weight: 700;
}

.letter.italic {
  font-family: "Liberation Serif", serif;
  font-style: italic;
  font-size: 30px;
}

.letter.under {
  text-decoration: underline;
  text-underline-offset: 4px;
}

.sign {
  font-size: 34px;
  font-weight: 300;
  color: #3b3a39;
}

.glyph {
  width: 28px;
  height: 32px;
  fill: none;
  stroke: #3b3a39;
  stroke-width: 2;
}

.glyph .blue {
  stroke: #3b86cf;
}

.decimals {
  flex-direction: column;
  align-items: flex-end;
  padding-right: 8px;
  font-size: 17px;
  line-height: 16px;
  color: #3b3a39;
}

.decimals span {
  display: flex;
  align-items: center;
}

.decimals svg {
  fill: none;
  stroke: #3b86cf;
  stroke-width: 2;
}

.drop {
  position: relative;
  height: 48px;
  background: #fff;
  border: 2px solid #c4c4c4;
  border-radius: 7px;
}

.drop select {
  width: 100%;
  height: 100%;
  padding-left: 9px;
  font-size: 23px;
}

.drop .chev {
  position: absolute;
  right: 6px;
  top: 18px;
  pointer-events: none;
}

.font-name { width: 281px; }
.font-size { width: 109px; }
.num-format { width: 310px; }

.big {
  font-size: 21px;
  line-height: 24px;
  text-align: center;
}

.big:disabled {
  color: #8e8e8e;
}

.big:disabled .chev {
  color: #b8b8b8;
}

.pic {
  height: 79px;
  display: flex;
  align-items: center;
  justify-content: center;
  gap: 9px;
}

.w92 { width: 92px; }
.w100 { width: 100px; }
.w108 { width: 108px; }
.w120 { width: 120px; }
.w148 { width: 148px; }
.w150 { width: 150px; }

.stack {
  display: flex;
  flex-direction: column;
}

.row {
  height: 44px;
  display: flex;
  align-items: center;
  gap: 11px;
  font-size: 21px;
}

/* Formula bar */
.formula-bar {
  flex: none;
  height: 58px;
  display: flex;
  align-items: center;
  background: #fff;
  border-bottom: 6px double #a8a8a8;
}

.name-box {
  width: 171px;
  height: 52px;
  display: flex;
  align-items: center;
  justify-content: space-between;
  padding: 0 9px 0 18px;
  margin-right: 10px;
  border: 2px solid #b4b4b4;
  border-bottom: 0;
  font-size: 23px;
  color: #333;
}

.name-box input {
  width: 110px;
}

.fx-btn {
  width: 60px;
  height: 36px;
  display: flex;
  align-items: center;
  justify-content: center;
}

.fx {
  font: italic 34px "Liberation Serif", serif;
  color: #4a4a4a;
}

.fx b {
  font-size: 28px;
}

.formula {
  flex: 1;
  height: 34px;
  padding-left: 13px;
  font-size: 23px;
  border-left: 2px solid #dcdcdc;
}

.expand {
  margin-right: 8px;
}

/* Worksheet */
.sheet {
  flex: 1;
  min-height: 0;
  position: relative;
  overflow: hidden;
  background: #fff;
}

.grid {
  width: 1px;
  table-layout: fixed;
  border-collapse: separate;
  border-spacing: 0;
}

.c-head { width: 46px; }
.c-a { width: 192px; }
.c-b { width: 466px; }
.c-s { width: 34px; }
.c-l { width: 166px; }
.c-f { width: 144px; }
.c-j { width: 82px; }
.c-n { width: 110px; }

.grid th {
  font: 20px/18px "Noto Sans", sans-serif;
  color: #606060;
}

.grid thead th {
  height: 44px;
  padding-left: 2px;
  border-right: 2px solid #dedede;
  border-bottom: 2px solid #b8b8b8;
  background: linear-gradient(#fff, #f5f5f5);
}

.grid thead .sel {
  padding-right: 12px;
  color: #3b734c;
  background: #f0f0f0;
  border-right-color: #d4d4d4;
}

.grid thead .corner {
  padding: 8px 0 0 10px;
  border-right-color: #b8b8b8;
}

.grid tbody th {
  vertical-align: bottom;
  padding: 0 1px 2px 0;
  border-right: 2px solid #b8b8b8;
  border-bottom: 2px solid #dedede;
  background: linear-gradient(90deg, #fff, #f5f5f5);
}

.grid tbody .sel {
  color: #3b734c;
  background: #f0f0f0;
}

.grid td {
  position: relative;
  overflow: hidden;
  vertical-align: top;
  border-right: 2px solid #d4d4d4;
  border-bottom: 2px solid #d4d4d4;
  font: 18px/24px "Liberation Sans", Arial, sans-serif;
}

.grid .ink { border-color: #000; }
.grid .soft-r { border-right-color: #d4d4d4; }
.grid .soft-b { border-bottom-color: #d4d4d4; }
.grid .no-r { border-right: 0; }
.grid .no-b { border-bottom: 0; }

.grid .shade {
  background: #c0c0c0;
  border-bottom: 0;
}

.grid .fill {
  background: #c0c0c0;
}

.grid .no {
  font-weight: 700;
  line-height: 20px;
  text-align: center;
  vertical-align: bottom;
}

.grid .left {
  text-align: left;
  vertical-align: middle;
  padding-left: 4px;
}

/* Form text runs across the cell grid, so it takes no height of its own */
.txt {
  height: 0;
  margin-left: -8px;
  white-space: pre;
}

.txt p * { line-height: 0; }
.txt span { font-size: 19px; }
.txt small { font-size: 12px; }
.txt .tiny { font-size: 10px; }
.txt .lg { font-size: 20px; }
.txt .md { font-size: 14px; }
.txt .up { vertical-align: 6px; }
.txt .up2 { vertical-align: 7px; }
.txt .down { vertical-align: -4px; }
.txt .o { font-size: 14px; }
.txt .h { font-size: 15px; }
.txt i.dots { font-style: normal; }

.l22 { line-height: 22px; }
.l26 { line-height: 26px; }
.l32 { line-height: 32px; }
.l34 { line-height: 34px; }

.txt.mid {
  margin: 0;
  text-align: center;
}

.txt.side { margin-left: 15px; }
.txt.near { margin-left: 2px; }

.txt h1 {
  font: bold 27px/36px "Open Sans", sans-serif;
}

.year {
  font-size: 40px;
  font-weight: 700;
  line-height: 50px;
}

.blank {
  display: inline-block;
  height: 2px;
  background: #000;
  vertical-align: -3px;
}

.blank.a { width: 336px; }
.blank.b { width: 358px; }
.blank.c { width: 792px; }

/* Floating form objects */
.box {
  position: absolute;
  width: 17px;
  height: 17px;
  border: 1px solid #000;
}

.box.sales { left: 691px; top: 51px; }
.box.loan { left: 805px; top: 50px; }
.box.elect { left: 863px; top: 26px; }

.dash {
  position: absolute;
  left: 144px;
  width: 564px;
  border-top: 1px dashed #000;
}

.dash.first { top: 191px; }
.dash.second { top: 215px; }

.selection {
  position: absolute;
  left: 44px;
  top: 40px;
  width: 196px;
  height: 130px;
  border: 4px solid #3b734c;
}

.selection::after {
  content: "";
  position: absolute;
  right: -8px;
  bottom: -8px;
  width: 14px;
  height: 14px;
  background: #3b734c;
  border: 2px solid #fff;
}

/* Sheet tabs */
.sheet-tabs {
  flex: none;
  height: 52px;
  display: flex;
  align-items: flex-start;
  background: linear-gradient(#f4f4f4, #efefef);
  border-top: 2px solid #c8c8c8;
  font-size: 23px;
  color: #5f5f5f;
}

.arrow {
  width: 46px;
  height: 46px;
  display: flex;
  align-items: center;
  justify-content: center;
}

.arrow:first-child {
  margin-left: 14px;
}

.st {
  min-width: 158px;
  height: 40px;
  padding: 8px 36px 0;
  border-right: 2px solid #cfcfcf;
}

.st.first {
  min-width: 160px;
  margin-left: 14px;
  border-left: 2px solid #cfcfcf;
}

.st.wide {
  padding: 8px 40px 0;
}

.st.active {
  height: 43px;
  padding-top: 5px;
  background: #fff;
  border: 1px solid #b4b4b4;
  border-top: 0;
  border-radius: 0 0 6px 6px;
  font-weight: 600;
  color: #3f7f50;
}

.st.plus {
  min-width: 76px;
  padding: 8px 28px 0;
}

/* Status bar */
.status {
  flex: none;
  height: 46px;
  display: flex;
  align-items: center;
  border-top: 2px solid #a0a0a0;
  background: linear-gradient(#e4e4e4, #d8d8d8);
  font-size: 24px;
  color: #4f4f4f;
}

.ready {
  margin-left: 48px;
}

.macro {
  margin: 0 31px 0 40px;
}

.access {
  display: flex;
  align-items: center;
  gap: 6px;
}

.views {
  margin-left: auto;
  display: flex;
  align-items: center;
  padding-right: 48px;
}

.view {
  width: 72px;
  height: 48px;
  display: flex;
  align-items: center;
  justify-content: center;
}

.view.on {
  background: #a6a6a6;
}

.zoom-btn {
  width: 44px;
  height: 40px;
  display: flex;
  align-items: center;
  justify-content: center;
}

.zoom {
  width: 200px;
  height: 8px;
  border-radius: 4px;
  background: #9c9c9c;
}

.zoom::-webkit-slider-thumb {
  appearance: none;
  width: 32px;
  height: 32px;
  border-radius: 50%;
  background: #fff;
  box-shadow: 0 1px 3px rgba(0, 0, 0, 0.4);
}

.percent {
  margin-left: 20px;
}
```
FILE: script.js
```js
// Row heights that differ from the default
const DEFAULT_HEIGHT = 24;
const rowHeights = {
  1: 22, 2: 102, 3: 48, 4: 30, 5: 26, 6: 28, 7: 28, 8: 26, 9: 96,
  19: 96, 21: 72, 23: 72, 35: 48, 37: 48
};
const extraColumns = 'KLMNOPQRSTUVWXY'.split('');

// Empty columns to the right of the form
const colgroup = document.querySelector('.grid colgroup');
const headRow = document.querySelector('.grid thead tr');
extraColumns.forEach(name => {
  const col = document.createElement('col');
  col.className = 'c-n';
  colgroup.appendChild(col);
  const th = document.createElement('th');
  th.textContent = name;
  headRow.appendChild(th);
});

// Row numbers and blank cells
document.querySelectorAll('.grid tbody tr').forEach((tr, i) => {
  const n = i + 1;
  const th = document.createElement('th');
  th.textContent = n;
  if (n <= 2) th.className = 'sel';
  tr.prepend(th);
  tr.style.height = `${rowHeights[n] || DEFAULT_HEIGHT}px`;
  for (let c = 0; c <= extraColumns.length; c++) {
    tr.appendChild(document.createElement('td'));
  }
});

// Dot leaders
document.querySelectorAll('.dots').forEach(el => {
  el.textContent = Array(Number(el.dataset.n)).fill('.').join('     ');
});
```
